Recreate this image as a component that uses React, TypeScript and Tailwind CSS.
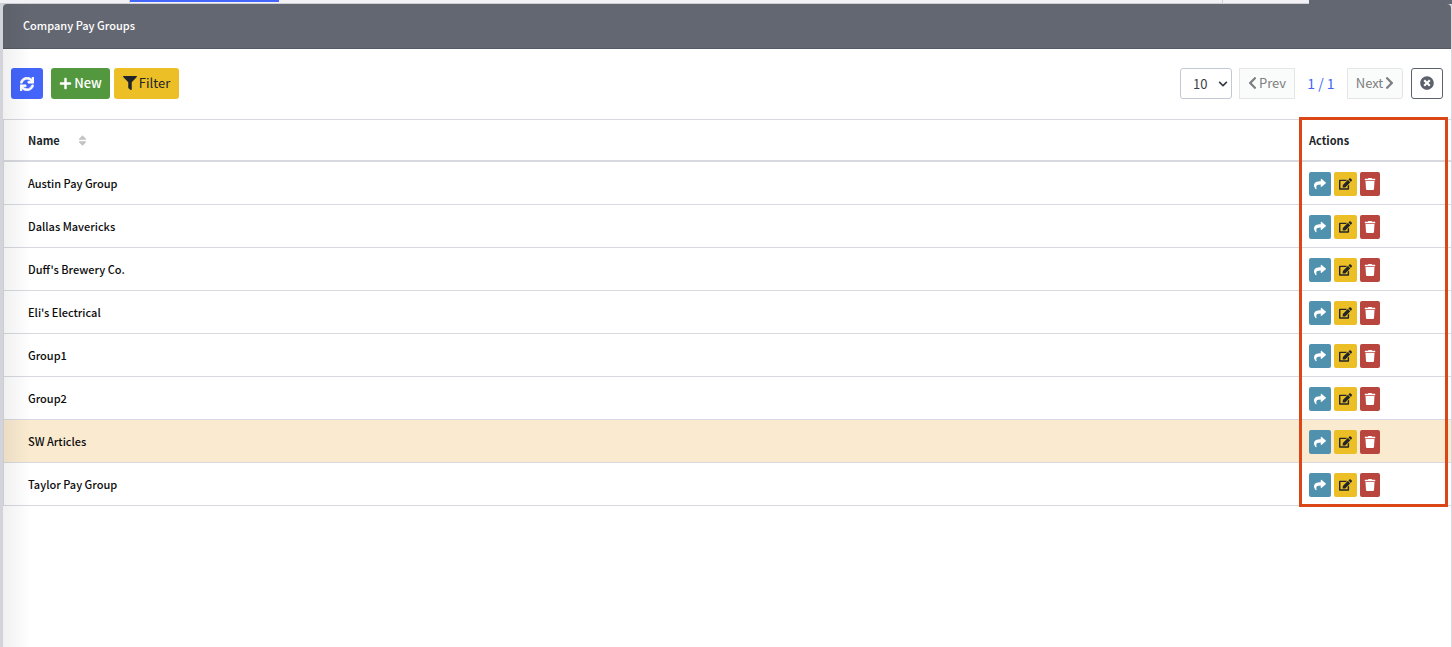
import { useState } from 'react'
import {
  FaChevronDown,
  FaChevronLeft,
  FaChevronRight,
  FaEdit,
  FaFilter,
  FaPlus,
  FaShare,
  FaSort,
  FaSync,
  FaTimesCircle,
  FaTrash,
} from 'react-icons/fa'

const payGroups = [
  'Austin Pay Group',
  'Dallas Mavericks',
  "Duff's Brewery Co.",
  "Eli's Electrical",
  'Group1',
  'Group2',
  'SW Articles',
  'Taylor Pay Group',
]

function TabStrip() {
  return (
    <div className="flex h-1 border-b border-[#cfcfd4] bg-[#f1f1f6]">
      <div className="w-[130px] border-r border-[#cfcfd4]" />
      <div className="h-[2px] w-[149px] bg-[#4365fa]" />
      <div className="grow" />
      <div className="w-[87px] border-l border-[#cfcfd4]" />
      <div className="h-1 w-[143px] bg-[#636771]" />
    </div>
  )
}

function Toolbar() {
  const [pageSize, setPageSize] = useState('10')

  return (
    <div className="flex items-center justify-between px-2 pt-[19px] pb-5 text-[13px]">
      <div className="flex">
        <button
          aria-label="Refresh"
          className="flex h-[31px] w-8 items-center justify-center rounded-[3px] bg-[#4365fa] text-white"
        >
          <FaSync className="size-[14px]" stroke="currentColor" strokeWidth="24" />
        </button>
        <button className="ml-2 flex h-[31px] w-[59px] items-center justify-center gap-[2px] rounded-[3px] bg-[#53983e] pb-px font-medium text-white">
          <FaPlus className="size-[13px]" />
          New
        </button>
        <button className="ml-1 flex h-[31px] w-[65px] items-center justify-center gap-[2px] rounded-[3px] bg-[#ecbf27] pb-px text-[#212529]">
          <FaFilter className="size-[14px]" />
          Filter
        </button>
      </div>
      <div className="flex items-center">
        <div className="relative">
          <select
            aria-label="Rows per page"
            value={pageSize}
            onChange={(e) => setPageSize(e.target.value)}
            className="block h-[31px] w-[52px] appearance-none rounded-[3px] border border-[#c4c9d6] bg-white pl-3 text-[#3a3f48]"
          >
            <option>10</option>
            <option>25</option>
            <option>50</option>
          </select>
          <FaChevronDown className="pointer-events-none absolute top-[11px] right-1 size-[10px] text-[#343a40]" />
        </div>
        <button
          disabled
          className="ml-[7px] flex h-[31px] w-14 items-center justify-center gap-[2px] border border-[#e3e5e6] bg-[#fafbfb] pb-px text-[#7c7e80]"
        >
          <FaChevronLeft className="h-[14px] w-[9px]" />
          Prev
        </button>
        <span className="w-[52px] text-center text-[14px] text-[#4365fa]">1 / 1</span>
        <button
          disabled
          className="flex h-[31px] w-14 items-center justify-center gap-[2px] rounded-r-[3px] border border-[#e3e5e6] bg-[#fafbfb] pb-px text-[#7c7e80]"
        >
          Next
          <FaChevronRight className="h-[14px] w-[9px]" />
        </button>
        <button
          aria-label="Close"
          className="ml-2 flex h-[31px] w-8 items-center justify-center rounded-[3px] border border-[#5c616b] bg-white pb-px text-[#5c616b]"
        >
          <FaTimesCircle className="size-[14px]" />
        </button>
      </div>
    </div>
  )
}

function RowActions({ name }: { name: string }) {
  return (
    <div className="flex gap-[3px] pt-[2px]">
      <button
        aria-label={`Open ${name}`}
        className="flex h-6 w-[22px] items-center justify-center rounded-[2px] bg-[#5092ae] text-white"
      >
        <FaShare className="size-3" />
      </button>
      <button
        aria-label={`Edit ${name}`}
        className="flex h-6 w-[23px] items-center justify-center rounded-[2px] bg-[#ecbf27] text-[#212529]"
      >
        <FaEdit className="h-3 w-[13px]" />
      </button>
      <button
        aria-label={`Delete ${name}`}
        className="flex h-6 w-5 items-center justify-center rounded-[2px] bg-[#b9453f] text-white"
      >
        <FaTrash className="size-3" />
      </button>
    </div>
  )
}

function PayGroupTable() {
  return (
    <div className="relative">
      <table className="w-full border-separate border-spacing-0 border-t border-l border-[#d8d9df] text-left text-[11px] font-medium text-[#0c0c0d]">
        <thead>
          <tr className="h-[42px]">
            <th className="border-b-2 border-[#d8d9df] p-0 pl-6 font-bold text-[#212529]">
              <div className="flex items-center gap-4">
                Name
                <FaSort className="size-[13px] text-[#c3c3c5]" />
              </div>
            </th>
            <th className="w-[142px] border-b-2 border-[#d8d9df] p-0 font-bold text-[#212529]">Actions</th>
          </tr>
        </thead>
        <tbody>
          {payGroups.map((name) => (
            <tr key={name} className={name === 'SW Articles' ? 'h-[43px] bg-[#faebd0]' : 'h-[43px]'}>
              <td className="border-b border-[#d8d9df] p-0 pl-6">{name}</td>
              <td className="border-b border-[#d8d9df] p-0">
                <RowActions name={name} />
              </td>
            </tr>
          ))}
        </tbody>
      </table>
      {/* highlight around the actions column */}
      <div className="pointer-events-none absolute -top-[2px] right-[3px] -bottom-[1px] w-[149px] border-[3px] border-[#db4617]" />
    </div>
  )
}

export default function App() {
  return (
    <div className="flex min-h-screen flex-col bg-[#d3d4da] font-['Noto_Sans_CJK_SC','Noto_Sans',sans-serif]">
      <TabStrip />
      <main className="relative ml-[3px] grow rounded-t-[4px] border-r border-[#d8d9df] bg-white">
        <h1 className="flex h-[45px] items-center rounded-t-[4px] border-b border-[#555963] bg-[#636771] px-5 pb-px text-[11px] font-medium text-white">
          Company Pay Groups
        </h1>
        <Toolbar />
        <PayGroupTable />
        <div className="pointer-events-none absolute inset-y-0 left-0 w-7 bg-linear-to-r from-black/6 to-transparent" />
      </main>
    </div>
  )
}
